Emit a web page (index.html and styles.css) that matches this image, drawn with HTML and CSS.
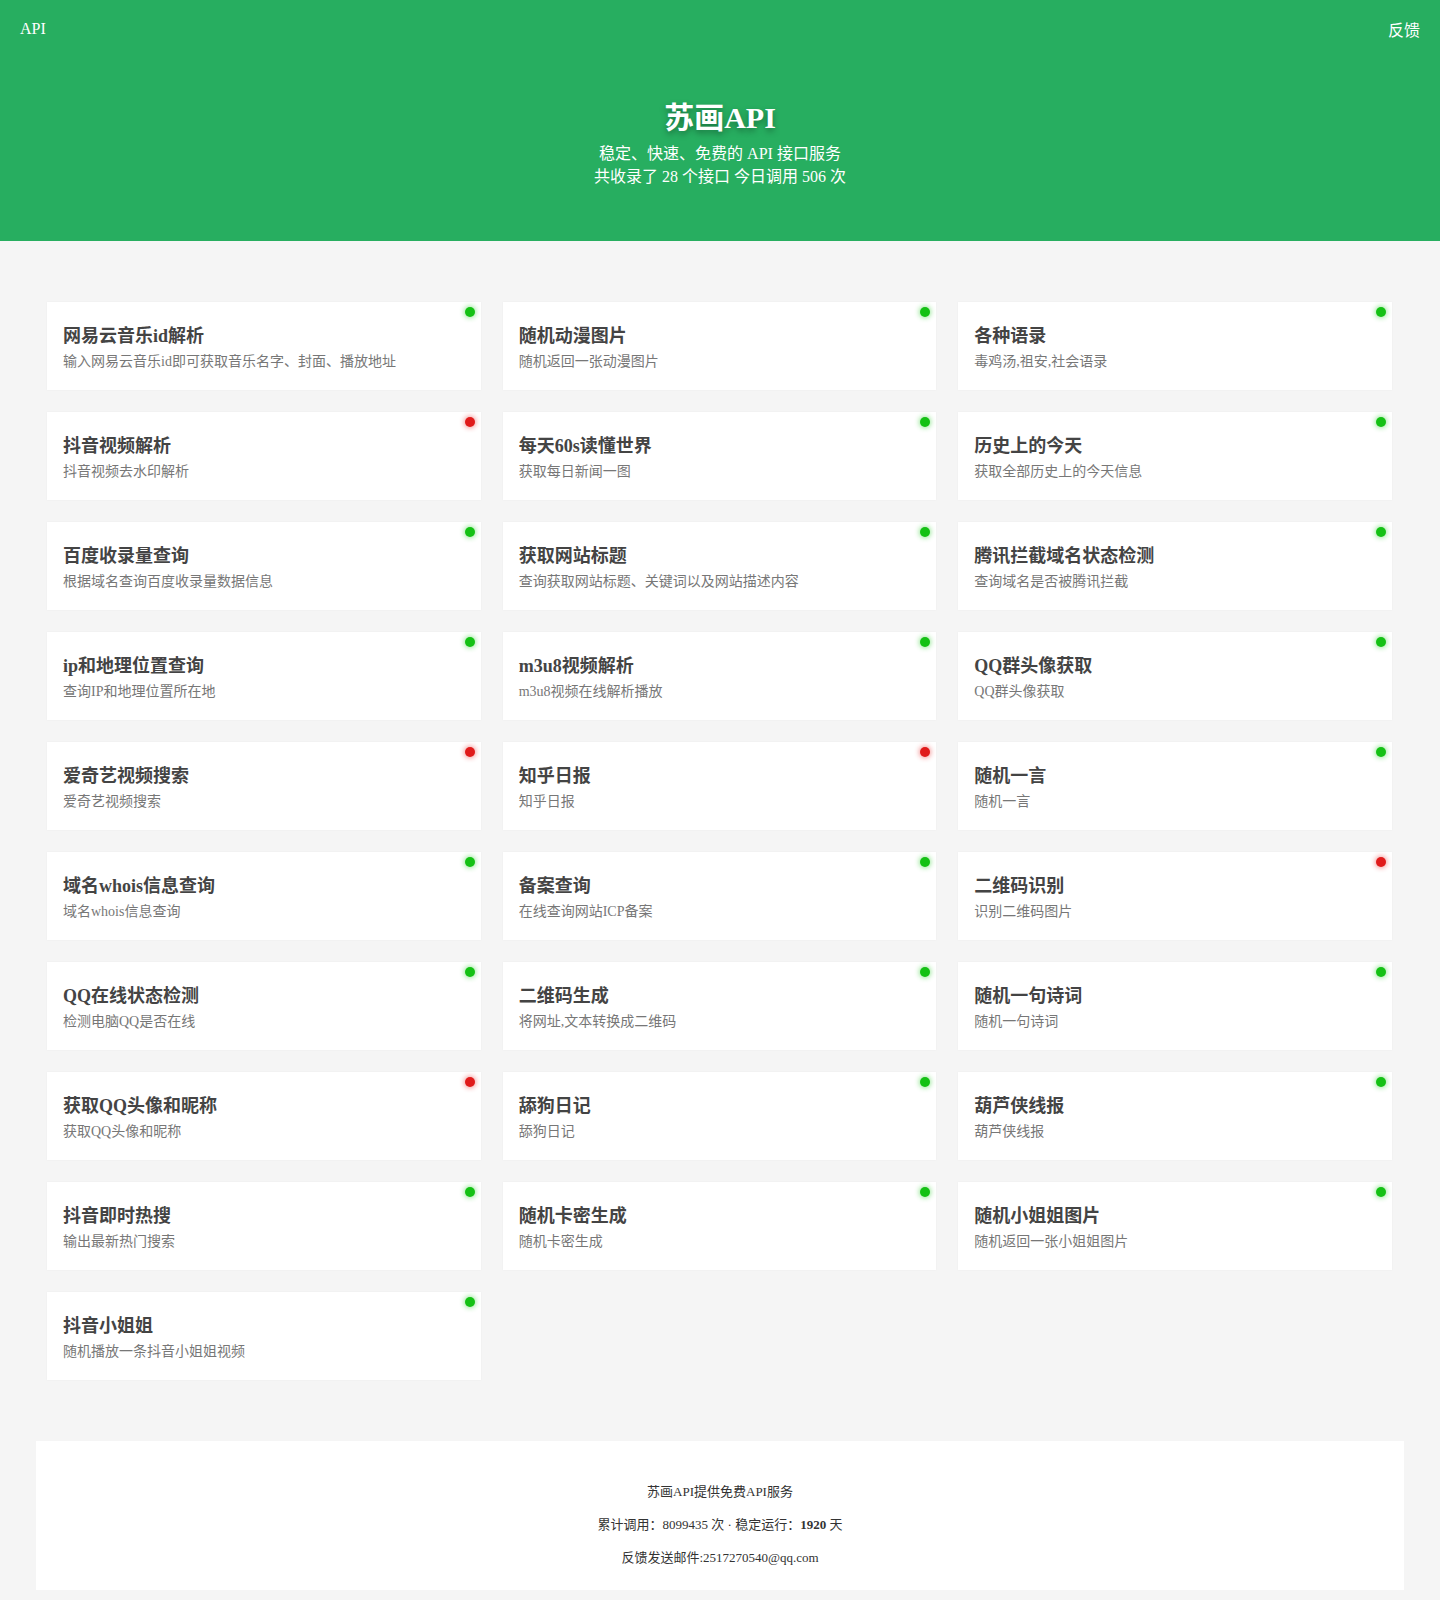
FILE: index.html
```html
<!DOCTYPE html>
<html lang="zh-CN">
<head>
<meta charset="utf-8">
<title>苏画API</title>
<link rel="stylesheet" href="styles.css">
</head>
<body>
<header class="hero">
  <div class="topbar">
    <a class="brand" href="#">API</a>
    <a class="feedback" href="#">反馈</a>
  </div>
  <h1 class="hero-title">苏画API</h1>
  <div class="hero-lines">
    <p class="hero-line">稳定、快速、免费的 API 接口服务</p>
    <p class="hero-line">共收录了 28 个接口 今日调用 506 次</p>
  </div>
</header>

<main class="grid">
  <div class="card"><span class="dot on"></span><h2>网易云音乐id解析</h2><p>输入网易云音乐id即可获取音乐名字、封面、播放地址</p></div>
  <div class="card"><span class="dot on"></span><h2>随机动漫图片</h2><p>随机返回一张动漫图片</p></div>
  <div class="card"><span class="dot on"></span><h2>各种语录</h2><p>毒鸡汤,祖安,社会语录</p></div>

  <div class="card"><span class="dot off"></span><h2>抖音视频解析</h2><p>抖音视频去水印解析</p></div>
  <div class="card"><span class="dot on"></span><h2>每天60s读懂世界</h2><p>获取每日新闻一图</p></div>
  <div class="card"><span class="dot on"></span><h2>历史上的今天</h2><p>获取全部历史上的今天信息</p></div>

  <div class="card"><span class="dot on"></span><h2>百度收录量查询</h2><p>根据域名查询百度收录量数据信息</p></div>
  <div class="card"><span class="dot on"></span><h2>获取网站标题</h2><p>查询获取网站标题、关键词以及网站描述内容</p></div>
  <div class="card"><span class="dot on"></span><h2>腾讯拦截域名状态检测</h2><p>查询域名是否被腾讯拦截</p></div>

  <div class="card"><span class="dot on"></span><h2>ip和地理位置查询</h2><p>查询IP和地理位置所在地</p></div>
  <div class="card"><span class="dot on"></span><h2>m3u8视频解析</h2><p>m3u8视频在线解析播放</p></div>
  <div class="card"><span class="dot on"></span><h2>QQ群头像获取</h2><p>QQ群头像获取</p></div>

  <div class="card"><span class="dot off"></span><h2>爱奇艺视频搜索</h2><p>爱奇艺视频搜索</p></div>
  <div class="card"><span class="dot off"></span><h2>知乎日报</h2><p>知乎日报</p></div>
  <div class="card"><span class="dot on"></span><h2>随机一言</h2><p>随机一言</p></div>

  <div class="card"><span class="dot on"></span><h2>域名whois信息查询</h2><p>域名whois信息查询</p></div>
  <div class="card"><span class="dot on"></span><h2>备案查询</h2><p>在线查询网站ICP备案</p></div>
  <div class="card"><span class="dot off"></span><h2>二维码识别</h2><p>识别二维码图片</p></div>

  <div class="card"><span class="dot on"></span><h2>QQ在线状态检测</h2><p>检测电脑QQ是否在线</p></div>
  <div class="card"><span class="dot on"></span><h2>二维码生成</h2><p>将网址,文本转换成二维码</p></div>
  <div class="card"><span class="dot on"></span><h2>随机一句诗词</h2><p>随机一句诗词</p></div>

  <div class="card"><span class="dot off"></span><h2>获取QQ头像和昵称</h2><p>获取QQ头像和昵称</p></div>
  <div class="card"><span class="dot on"></span><h2>舔狗日记</h2><p>舔狗日记</p></div>
  <div class="card"><span class="dot on"></span><h2>葫芦侠线报</h2><p>葫芦侠线报</p></div>

  <div class="card"><span class="dot on"></span><h2>抖音即时热搜</h2><p>输出最新热门搜索</p></div>
  <div class="card"><span class="dot on"></span><h2>随机卡密生成</h2><p>随机卡密生成</p></div>
  <div class="card"><span class="dot on"></span><h2>随机小姐姐图片</h2><p>随机返回一张小姐姐图片</p></div>

  <div class="card"><span class="dot on"></span><h2>抖音小姐姐</h2><p>随机播放一条抖音小姐姐视频</p></div>
</main>

<footer class="footer">
  <p>苏画API提供免费API服务</p>
  <p>累计调用：8099435 次 · 稳定运行：<b>1920</b> 天</p>
  <p>反馈发送邮件:2517270540@qq.com</p>
</footer>
</body>
</html>
```

FILE: styles.css
```css
* { box-sizing: border-box; }

body {
  margin: 0;
  background: #f5f5f5;
  font-family: "Liberation Serif", "Noto Sans CJK SC", serif;
  color: #333;
}

a { text-decoration: none; }

.hero {
  background: #27ae60;
  height: 241px;
  text-align: center;
  color: #fff;
}

.topbar {
  display: flex;
  justify-content: space-between;
  align-items: flex-start;
  padding: 0 20px;
  height: 98px;
}

.brand {
  color: #fff;
  font-size: 16px;
  line-height: 16px;
  margin-top: 21px;
}

.feedback {
  color: #fff;
  font-size: 16px;
  line-height: 16px;
  margin-top: 23px;
}

.hero-title {
  margin: 0;
  font-size: 30px;
  line-height: 40px;
  font-weight: bold;
  text-shadow: 0 3px 6px rgba(0, 0, 0, 0.35);
}

.hero-lines {
  margin-top: 4px;
}

.hero-line {
  margin: 0;
  font-size: 16px;
  line-height: 23px;
}

.grid {
  display: grid;
  grid-template-columns: repeat(3, 1fr);
  column-gap: 22px;
  row-gap: 22px;
  padding: 61px 48px 0 47px;
}

.card {
  position: relative;
  background: #fff;
  height: 88px;
  padding: 22px 16px 0 16px;
  box-shadow: 0 0 2px rgba(0, 0, 0, 0.04);
}

.card h2 {
  margin: 0;
  font-size: 18px;
  line-height: 24px;
  font-weight: bold;
  color: #444;
}

.card p {
  margin: 4px 0 0;
  font-size: 14px;
  line-height: 20px;
  color: #777;
}

.dot {
  position: absolute;
  top: 5px;
  right: 6px;
  width: 10px;
  height: 10px;
  border-radius: 50%;
}

.dot.on {
  background: #14c114;
  box-shadow: 0 0 5px 1px rgba(20, 200, 20, 0.45);
}

.dot.off {
  background: #e01b1b;
  box-shadow: 0 0 5px 1px rgba(230, 20, 20, 0.45);
}

.footer {
  margin: 61px 36px 10px 36px;
  background: #fff;
  height: 149px;
  padding-top: 34px;
  text-align: center;
  font-size: 13px;
  color: #333;
}

.footer p {
  margin: 0;
  line-height: 33px;
}
```
